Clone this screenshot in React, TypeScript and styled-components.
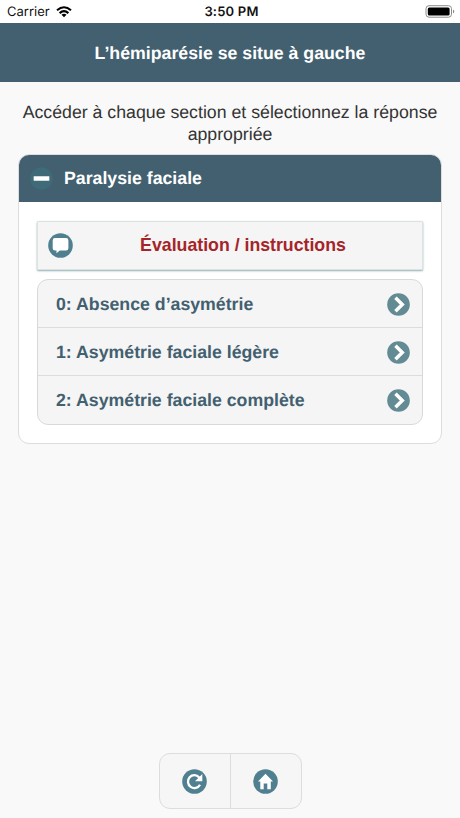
import React from "react";
import styled, { createGlobalStyle } from "styled-components";

const slate = "#42606f";
const teal = "#508090";

const GlobalStyle = createGlobalStyle`
  * { box-sizing: border-box; }
  body {
    margin: 0;
    background: #f9f9f9;
    color: #333;
    font-family: "Liberation Sans", Arial, sans-serif;
    text-rendering: geometricPrecision;
  }
`;

const Screen = styled.div`
  width: 460px;
  height: 818px;
  display: flex;
  flex-direction: column;
  overflow: hidden;
`;

const StatusBar = styled.div`
  height: 23px;
  flex: none;
  display: grid;
  grid-template-columns: 1fr auto 1fr;
  align-items: center;
  padding: 1px 5px 0 7px;
  background: #fff;
  color: #111;
  font-family: Inter, sans-serif;
  font-size: 13px;
`;

const Carrier = styled.div`
  display: flex;
  align-items: center;
  gap: 6px;
`;

const Clock = styled.div`
  padding-left: 1px;
  font-weight: 600;
  font-size: 13px;
  letter-spacing: 0.2px;
`;

const BatteryIcon = styled.svg`
  justify-self: end;
  display: block;
`;

const TitleBar = styled.h1`
  height: 59px;
  flex: none;
  margin: 0;
  padding-top: 1px;
  display: flex;
  align-items: center;
  justify-content: center;
  background: ${slate};
  color: #fff;
  font-size: 17.73px;
  line-height: 22px;
`;

const Label = styled.span`
  white-space: nowrap;
`;

const Prompt = styled.p`
  margin: 19px 0 9px;
  text-align: center;
  font-size: 17.73px;
  line-height: 22px;
`;

const Card = styled.section`
  margin: 0 18px;
  height: 290px;
  flex: none;
  border: 1px solid #ddd;
  border-radius: 11px;
  background: #fff;
  overflow: hidden;
`;

const CardHeader = styled.h2`
  height: 48px;
  margin: -1px -1px 0;
  padding: 1px 0 0 12px;
  display: flex;
  align-items: center;
  gap: 11px;
  background: ${slate};
  color: #fff;
  font-size: 17.73px;
`;

const CardBody = styled.div`
  padding: 19px 18px 0;
`;

const InfoButton = styled.button`
  width: 100%;
  height: 49px;
  padding: 0 10px;
  display: grid;
  grid-template-columns: 26px 1fr;
  align-items: center;
  border: 1px solid #dce1e2;
  border-radius: 1px;
  background: #f5f5f5;
  box-shadow: 0 1px 2px #8fb0b2;
  color: #a52429;
  font: bold 17.73px "Liberation Sans", Arial, sans-serif;
  text-align: center;
`;

const Options = styled.ul`
  height: 146px;
  margin: 9px 0 0;
  padding: 0;
  list-style: none;
  display: grid;
  grid-template-rows: repeat(3, 48px);
  border: 1px solid #d9d9d9;
  border-radius: 11px;
  background: #f5f5f5;
`;

const Option = styled.li`
  display: flex;
  align-items: center;
  justify-content: space-between;
  padding: 1px 12px 0 18px;
  color: ${slate};
  font-size: 17.73px;
  font-weight: bold;
  &:not(:last-child) { border-bottom: 1px solid #dcdcdc; }
`;

const Footer = styled.footer`
  margin-top: auto;
  height: 65px;
  flex: none;
  display: flex;
  justify-content: center;
  align-items: flex-start;
`;

const ButtonGroup = styled.div`
  width: 143px;
  height: 56px;
  display: grid;
  grid-template-columns: 70px 1fr;
  border: 1px solid #ddd;
  border-radius: 11px;
  background: #f6f6f6;
`;

const ToolButton = styled.button`
  padding: 0 1px 0 0;
  display: flex;
  align-items: center;
  justify-content: center;
  border: 0;
  background: transparent;
  & + & { border-left: 1px solid #ddd; }
`;

const Glyph = styled.svg`
  display: block;
  flex: none;
`;

const Disc = ({ size = 25, fill = teal, children }: { size?: number; fill?: string; children: React.ReactNode }) => (
  <Glyph width={size} height={size} viewBox="0 0 25 25">
    <circle cx="12.5" cy="12.5" r="12.3" fill={fill} />
    {children}
  </Glyph>
);

const options = [
  "0: Absence d’asymétrie",
  "1: Asymétrie faciale légère",
  "2: Asymétrie faciale complète",
];

export default function App() {
  return (
    <Screen>
      <GlobalStyle />
      <StatusBar>
        <Carrier>
          Carrier
          <Glyph width="16" height="12" viewBox="0 0 16 12">
            <g fill="none" stroke="#000" strokeWidth="2.1">
              <path d="M1 4.3Q8-1.8 15 4.3" />
              <path d="M3.6 7.1Q8 3.3 12.4 7.1" />
            </g>
            <path d="M5.5 8.7Q8 6.9 10.5 8.7L8 11.3Z" />
          </Glyph>
        </Carrier>
        <Clock>3:50 PM</Clock>
        <BatteryIcon width="30" height="14" viewBox="0 0 30 14">
          <rect x="1" y="0.7" width="25.5" height="11.5" rx="3" fill="none" stroke="#8c8c8c" />
          <rect x="2.8" y="2.4" width="21.8" height="8" rx="1.5" />
          <path d="M28 4.5v4q1.2-.6 1.2-2T28 4.5Z" fill="#888" />
        </BatteryIcon>
      </StatusBar>
      <TitleBar>
        <Label>L’hémiparésie se situe à gauche</Label>
      </TitleBar>
      <Prompt>
        Accéder à chaque section et sélectionnez la réponse
        <br />
        appropriée
      </Prompt>
      <Card>
        <CardHeader>
          <Disc size={23} fill="#3f6a78">
            <path d="M4 10h17v5H4z" fill="#fff" />
          </Disc>
          <Label>Paralysie faciale</Label>
        </CardHeader>
        <CardBody>
          <InfoButton>
            <Disc>
              <path
                d="M7 5h11q2.4 0 2.4 2.4v7.8q0 2.4-2.4 2.4h-6.2L8.5 20.3v-2.7H7q-2.3 0-2.3-2.4V7.4Q4.7 5 7 5Z"
                fill="#fff"
              />
            </Disc>
            <Label>Évaluation / instructions</Label>
          </InfoButton>
          <Options>
            {options.map((label) => (
              <Option key={label}>
                <Label>{label}</Label>
                <Disc size={23} fill="#628b94">
                  <path d="M9.2 5.2L16.6 12.5L9.2 19.8" fill="none" stroke="#fff" strokeWidth="3.8" />
                </Disc>
              </Option>
            ))}
          </Options>
        </CardBody>
      </Card>
      <Footer>
        <ButtonGroup>
          <ToolButton aria-label="Recommencer">
            <Disc>
              <path d="M17.2 8.4A6.4 6.4 0 1 0 18 15.7" fill="none" stroke="#fff" strokeWidth="2.3" />
              <path d="M20.3 5V12.3H13Z" fill="#fff" />
            </Disc>
          </ToolButton>
          <ToolButton aria-label="Accueil">
            <Disc>
              <path d="M12.5 4.7L5 12.4H7.3V20.2H10.7V14.6H14.3V20.2H17.8V12.4H20Z" fill="#fff" />
            </Disc>
          </ToolButton>
        </ButtonGroup>
      </Footer>
    </Screen>
  );
}
